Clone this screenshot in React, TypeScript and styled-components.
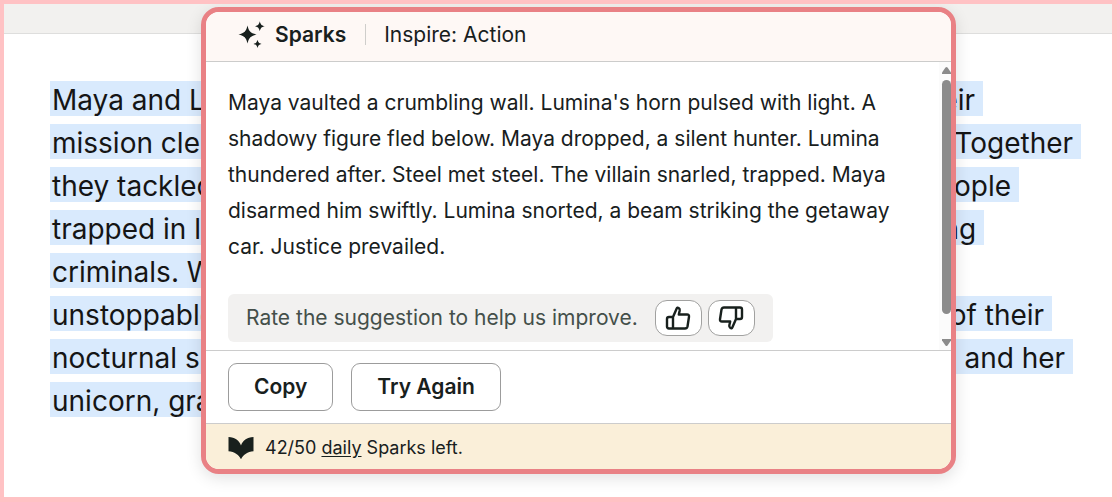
import React from "react";
import styled, { createGlobalStyle } from "styled-components";

const GlobalStyle = createGlobalStyle`
  *, *::before, *::after { box-sizing: border-box; }
  body {
    margin: 0;
    font-family: Inter, "Liberation Sans", sans-serif;
    color: #18201d;
    background: #ffffff;
  }
`;

const Frame = styled.main`
  position: relative;
  min-height: 100vh;
  overflow: hidden;
  border: solid #ffc2c4;
  border-width: 4px 5px 5px 4px;
  background: #ffffff;
`;

const TopBar = styled.div`
  height: 30px;
  background: #f2f1ef;
  border-bottom: 1px solid #dededd;
`;

const Document = styled.article`
  padding: 44px 31px 60px 46px;
`;

const Line = styled.p<{ $inset: number }>`
  margin: 0 ${(p) => p.$inset}px 0 0;
  height: 43px;
  padding-top: 3px;
  font-size: 28px;
  line-height: 39px;
  color: #151515;
`;

const Highlight = styled.span`
  display: flex;
  justify-content: space-between;
  height: 35px;
  padding-left: 2px;
  white-space: pre;
  background: #d9eafd;
`;

const Panel = styled.section`
  position: absolute;
  top: 3px;
  left: 197px;
  right: 156px;
  overflow: hidden;
  border: 5px solid #e98185;
  border-radius: 18px;
  background: #ffffff;
  box-shadow: 0 4px 16px rgba(0, 0, 0, 0.12);
`;

const Header = styled.header`
  display: flex;
  align-items: center;
  height: 50px;
  padding: 0 32px 4px;
  background: #fef8f5;
  border-bottom: 1px solid #cccccb;
`;

const Title = styled.h2`
  margin: 0 19px 0 10px;
  font-size: 21px;
  line-height: 28px;
  font-weight: 600;
`;

const Subtitle = styled.span`
  padding-left: 18px;
  border-left: 1px solid #cfcecb;
  font-size: 21px;
  line-height: 21px;
`;

const Body = styled.div`
  display: flex;
  height: 289px;
  border-bottom: 1px solid #cccccc;
`;

const Content = styled.div`
  flex: 1;
  padding: 23px 22px 0;
`;

const Story = styled.p`
  margin: 0 0 29px;
  font-size: 21px;
  line-height: 36px;
  white-space: nowrap;
`;

const Rating = styled.div`
  display: inline-flex;
  align-items: center;
  gap: 6px;
  height: 48px;
  padding: 0 18px;
  border-radius: 6px;
  background: #f2f1f0;
  color: #444f4a;
  font-size: 21px;
  line-height: 28px;
`;

const RatingText = styled.span`
  margin-right: 11px;
  white-space: nowrap;
`;

const IconButton = styled.button`
  display: flex;
  align-items: center;
  justify-content: center;
  width: 47px;
  height: 36px;
  padding: 0;
  border: 1px solid #a1a1a0;
  border-radius: 12px;
  background: #ffffff;
  color: #18201d;
`;

const ScrollTrack = styled.div`
  display: flex;
  flex-direction: column;
  align-items: flex-end;
  gap: 6px;
  width: 12px;
  padding: 5px 0 4px;
  background: #fbfbfb;
`;

const ScrollThumb = styled.div`
  width: 9px;
  height: 234px;
  margin-bottom: auto;
  border-radius: 5px;
  background: #8b8b8b;
`;

const Actions = styled.div`
  display: flex;
  gap: 18px;
  padding: 12px 22px;
  border-bottom: 1px solid #cccccc;
`;

const ActionButton = styled.button`
  height: 48px;
  padding: 0 25px;
  border: 1px solid #9c9c9c;
  border-radius: 9px;
  background: #ffffff;
  color: #18201d;
  font-family: inherit;
  font-size: 21px;
  line-height: 28px;
  font-weight: 600;
`;

const Footer = styled.footer`
  display: flex;
  align-items: center;
  gap: 11px;
  height: 45px;
  padding: 2px 22px 0;
  background: #faefd9;
  font-size: 18px;
  line-height: 24px;
`;

const DailyLink = styled.a`
  color: inherit;
  text-decoration: underline;
  text-underline-offset: 2px;
`;

const SparksIcon = () => (
  <svg width="27" height="27" viewBox="0 0 27 27" fill="currentColor" aria-hidden="true">
    <path d="M9.500 4.500 C10.900 10.500 12.500 12 18.500 13.500 C12.500 15 10.900 16.500 9.500 22.500 C8.100 16.500 6.500 15 .5 13.500 C6.500 12 8.100 10.500 9.500 4.500Z" />
    <path d="M21.800 .2 C22.700 3.600 23.300 4.300 26.800 5.200 C23.300 6.100 22.700 6.800 21.800 10.200 C20.900 6.800 20.300 6.100 16.800 5.200 C20.300 4.300 20.900 3.600 21.800 .2Z" />
    <path d="M19.500 18.800 C20.300 21.500 20.800 22.100 23.500 22.900 C20.800 23.700 20.300 24.300 19.500 27 C18.700 24.300 18.200 23.700 15.500 22.900 C18.200 22.100 18.700 21.500 19.500 18.800Z" />
  </svg>
);

const ThumbUp = () => (
  <svg
    width="26"
    height="26"
    viewBox="0 0 26 26"
    fill="none"
    stroke="currentColor"
    strokeWidth="2.4"
    strokeLinejoin="round"
    strokeLinecap="round"
    aria-hidden="true"
  >
    <path d="M8 12 L11.700 3.500 Q12.300 2.200 13.600 3 Q15 3.900 14.700 5.500 L13.800 9.500 H22 Q24.300 9.500 24 11.800 L22.500 21.500 Q22 23.500 20 23.500 H4 Q2 23.500 2 21.500 V14 Q2 12 4 12 Z M8 12 V23.500" />
  </svg>
);

const ThumbDown = () => (
  <svg
    width="26"
    height="26"
    viewBox="0 0 26 26"
    fill="none"
    stroke="currentColor"
    strokeWidth="2.4"
    strokeLinejoin="round"
    strokeLinecap="round"
    aria-hidden="true"
  >
    <path d="M18 14 L14.300 22.500 Q13.700 23.800 12.400 23 Q11 22.100 11.300 20.500 L12.200 16.500 H4 Q1.700 16.500 2 14.200 L3.500 4.500 Q4 2.500 6 2.500 H22 Q24 2.500 24 4.500 V12 Q24 14 22 14 Z M18 14 V2.500" />
  </svg>
);

const BookIcon = () => (
  <svg width="26" height="24" viewBox="0 0 26 24" fill="currentColor" aria-hidden="true">
    <path d="M.5 1 C7 1.500 11.500 4.500 13 9.500 C14.500 4.500 19 1.500 25.500 1 V15.200 C19.500 15.700 15.500 18.500 13 23.200 C10.500 18.500 6.500 15.700 .5 15.200Z" />
  </svg>
);

const ArrowIcon = ({ down = false }: { down?: boolean }) => (
  <svg width="9" height="7" viewBox="0 0 9 7" fill="#8b8b8b" aria-hidden="true">
    <path d={down ? "M0 0H9V1.500L5.500 6.500Q4.500 7.500 3.500 6.500L0 1.500Z" : "M0 7H9V5.500L5.500 .5Q4.500-.5 3.500 .5L0 5.500Z"} />
  </svg>
);

const documentLines = [
  { start: "Maya and L", end: "eir ", inset: 98 },
  { start: "mission cle", end: "Together ", inset: 0 },
  { start: "they tackled", end: "people ", inset: 62 },
  { start: "trapped in l", end: "ing ", inset: 97 },
  { start: "criminals. W", end: "", inset: 180 },
  { start: "unstoppable", end: "of their ", inset: 29 },
  { start: "nocturnal s", end: "and her ", inset: 8 },
  { start: "unicorn, gra", end: "", inset: 180 },
];

const storyLines = [
  "Maya vaulted a crumbling wall. Lumina's horn pulsed with light. A",
  "shadowy figure fled below. Maya dropped, a silent hunter. Lumina",
  "thundered after. Steel met steel. The villain snarled, trapped. Maya",
  "disarmed him swiftly. Lumina snorted, a beam striking the getaway",
  "car. Justice prevailed.",
];

export default function App() {
  return (
    <Frame>
      <GlobalStyle />
      <TopBar />
      <Document>
        {documentLines.map((line) => (
          <Line key={line.start} $inset={line.inset}>
            <Highlight>
              <span>{line.start}</span>
              <span>{line.end}</span>
            </Highlight>
          </Line>
        ))}
      </Document>
      <Panel aria-label="Sparks suggestion">
        <Header>
          <SparksIcon />
          <Title>Sparks</Title>
          <Subtitle>Inspire: Action</Subtitle>
        </Header>
        <Body>
          <Content>
            <Story>
              {storyLines.map((line) => (
                <React.Fragment key={line}>
                  {line}
                  <br />
                </React.Fragment>
              ))}
            </Story>
            <Rating>
              <RatingText>Rate the suggestion to help us improve.</RatingText>
              <IconButton type="button" aria-label="Good suggestion">
                <ThumbUp />
              </IconButton>
              <IconButton type="button" aria-label="Poor suggestion">
                <ThumbDown />
              </IconButton>
            </Rating>
          </Content>
          <ScrollTrack aria-hidden="true">
            <ArrowIcon />
            <ScrollThumb />
            <ArrowIcon down />
          </ScrollTrack>
        </Body>
        <Actions>
          <ActionButton type="button">Copy</ActionButton>
          <ActionButton type="button">Try Again</ActionButton>
        </Actions>
        <Footer>
          <BookIcon />
          <span>
            42/50 <DailyLink href="#daily">daily</DailyLink> Sparks left.
          </span>
        </Footer>
      </Panel>
    </Frame>
  );
}
